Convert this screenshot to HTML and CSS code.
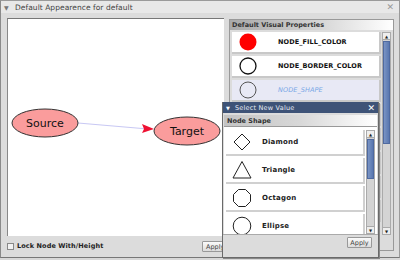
FILE: index.html
```html
<!DOCTYPE html>
<html>
<head>
<meta charset="utf-8">
<link rel="stylesheet" href="styles.css">
</head>
<body>
<div class="window">
  <div class="titlebar">
    <span class="tri">▼</span>
    <span class="title">Default Appearence for default</span>
    <span class="close">✕</span>
  </div>
  <div class="main">
    <div class="leftcol">
      <div class="canvas">
        <svg class="graph" width="217" height="218" viewBox="0 0 217 218">
          <line x1="71" y1="105" x2="141" y2="111" stroke="#c8c8f4" stroke-width="1"/>
          <polygon points="147,111 135,106 137,111 135,115" fill="#ee1133"/>
          <ellipse cx="38" cy="105" rx="33" ry="14" fill="#fa9c9c" stroke="#333" stroke-width="1"/>
          <text x="38" y="109" text-anchor="middle" class="nodelabel">Source</text>
          <ellipse cx="180" cy="113" rx="33" ry="14" fill="#fa9c9c" stroke="#333" stroke-width="1"/>
          <text x="180" y="117" text-anchor="middle" class="nodelabel">Target</text>
        </svg>
      </div>
      <div class="bottomrow">
        <span class="checkbox"></span>
        <span class="locklabel">Lock Node With/Height</span>
        <span class="btn mainapply">Apply</span>
      </div>
    </div>
    <div class="rightpanel">
      <div class="panelhead">Default Visual Properties</div>
      <div class="listwrap">
        <div class="rows">
          <div class="row"><svg width="20" height="20" viewBox="0 0 20 20"><circle cx="10" cy="10" r="8.5" fill="#ff0000"/></svg><span class="prop">NODE_FILL_COLOR</span></div>
          <div class="row"><svg width="20" height="20" viewBox="0 0 20 20"><circle cx="10" cy="10" r="8" fill="none" stroke="#111" stroke-width="1.3"/></svg><span class="prop">NODE_BORDER_COLOR</span></div>
          <div class="row sel"><svg width="20" height="20" viewBox="0 0 20 20"><circle cx="10" cy="10" r="8" fill="none" stroke="#555" stroke-width="1"/></svg><span class="prop italic">NODE_SHAPE</span></div>
          <div class="row"></div>
          <div class="row"></div>
          <div class="row"></div>
          <div class="row"></div>
          <div class="row"></div>
        </div>
        <div class="scroll outer">
          <div class="arrow up">▲</div>
          <div class="track"><div class="thumb"></div></div>
          <div class="arrow">▼</div>
        </div>
      </div>
    </div>
  </div>
  <div class="popup">
    <div class="ptitle">
      <span class="ptri">▼</span>
      <span class="ptext">Select New Value</span>
      <span class="pclose">✕</span>
    </div>
    <div class="phead">Node Shape</div>
    <div class="plistwrap">
      <div class="prows">
        <div class="prow"><svg width="20" height="20" viewBox="0 0 20 20"><polygon points="10,2 18,10 10,18 2,10" fill="none" stroke="#222" stroke-width="1"/></svg><span class="pname">Diamond</span></div>
        <div class="prow"><svg width="20" height="20" viewBox="0 0 20 20"><polygon points="10,1.5 19,18 1,18" fill="none" stroke="#222" stroke-width="1"/></svg><span class="pname">Triangle</span></div>
        <div class="prow"><svg width="20" height="20" viewBox="0 0 20 20"><polygon points="6.5,1.5 13.5,1.5 18.5,6.5 18.5,13.5 13.5,18.5 6.5,18.5 1.5,13.5 1.5,6.5" fill="none" stroke="#222" stroke-width="1"/></svg><span class="pname">Octagon</span></div>
        <div class="prow"><svg width="20" height="20" viewBox="0 0 20 20"><circle cx="10" cy="10" r="8.8" fill="none" stroke="#222" stroke-width="1"/></svg><span class="pname">Ellipse</span></div>
      </div>
      <div class="scroll inner">
        <div class="arrow up">▲</div>
        <div class="track"><div class="thumb"></div></div>
        <div class="arrow">▼</div>
      </div>
    </div>
    <div class="pbottom"><span class="btn">Apply</span></div>
  </div>
</div>
</body>
</html>
```
FILE: styles.css
```css
* { box-sizing: border-box; }
html, body { margin: 0; padding: 0; }
body {
  width: 400px; height: 260px; overflow: hidden;
  font-family: "DejaVu Sans", sans-serif;
  background: #d8d8d8;
}
.window {
  position: relative;
  width: 400px; height: 258px;
  background: #dcdcdc;
  border-left: 1px solid #8a8a8a;
  border-top: 1px solid #9a9a9a;
  border-right: 1px solid #9a9a9a;
  border-bottom: 1px solid #777;
}
.titlebar {
  height: 12px;
  background: #e8e8e8;
  display: flex; align-items: center;
  font-size: 7.5px; color: #444;
  padding-left: 3px;
}
.tri { font-size: 6px; color: #777; width: 11px; }
.title { flex: 1; letter-spacing: 0.05px; }
.close { color: #999; font-size: 9px; margin-right: 5px; }
.main {
  display: flex;
  padding: 5px 0 0 6px;
  height: 244px;
}
.leftcol {
  width: 222px;
  display: flex; flex-direction: column;
}
.canvas {
  width: 217px; height: 218px;
  background: #fff;
  border-top: 1px solid #777;
  border-left: 1px solid #888;
  position: relative;
}
.graph { position: absolute; left: -1px; top: -1px; }
.nodelabel { font-family: "DejaVu Sans", sans-serif; font-size: 11px; fill: #111; }
.bottomrow {
  display: flex; align-items: center;
  height: 16px; margin-top: 2px;
  font-size: 6.5px; font-weight: bold; color: #222;
}
.checkbox {
  width: 7px; height: 7px; border: 1px solid #888; background: #f2f2f2;
  margin-right: 3px;
}
.locklabel { flex: 1; letter-spacing: 0.1px; }
.btn {
  display: inline-block;
  font-size: 6.5px; font-weight: normal; color: #444;
  border: 1px solid #999;
  background: linear-gradient(#fafafa, #dcdcdc);
  padding: 1px 3px;
  border-radius: 1px;
}
.mainapply { margin-right: -3px; width: 30px; height: 11px; }
.rightpanel {
  width: 165px; height: 232px;
  margin-top: 1px;
  border: 1px solid #999;
  background: #dcdcdc;
  display: flex; flex-direction: column;
}
.panelhead {
  height: 10px;
  background: linear-gradient(90deg, #a9a9a9, #c8c8c8 40%, #ffffff);
  font-size: 6.5px; font-weight: bold; color: #333;
  padding-left: 2px; line-height: 10px;
}
.listwrap {
  display: flex; gap: 1px;
  padding: 2px 2px 0 2px;
  height: 205px;
  overflow: hidden;
}
.rows { flex: 1; display: flex; flex-direction: column; gap: 2px; overflow: hidden; }
.row {
  flex: none; height: 22px;
  background: #fff;
  border-right: 2px solid #c8c8c8;
  border-bottom: 2px solid #c8c8c8;
  display: flex; align-items: center;
  padding-left: 6px;
}
.row.sel { background: #e8e9f5; }
.prop {
  margin-left: 20px;
  font-size: 6.5px; font-weight: bold; color: #111;
  letter-spacing: 0.1px;
}
.prop.italic { font-weight: normal; font-style: italic; color: #7aa8e6; }
.scroll {
  width: 9px;
  display: flex; flex-direction: column;
  background: #d4d4d4;
  border: 1px solid #aaa;
}
.arrow {
  height: 7px; font-size: 4px; line-height: 7px; text-align: center;
  color: #222; background: #eee; border-bottom: 1px solid #aaa;
}
.arrow:last-child { border-bottom: none; border-top: 1px solid #aaa; }
.track { flex: 1; padding: 1px 0; }
.thumb {
  background: linear-gradient(90deg, #7a94c4, #5a78b0);
  border: 1px solid #4f6aa0;
}
.outer .thumb { height: 103px; }
.inner .thumb { height: 40px; }
.popup {
  position: absolute;
  left: 221px; top: 101px;
  width: 157px; height: 156px;
  background: #dcdcdc;
  border: 1px solid #6a6a6a;
  border-top: none;
  box-shadow: 1px 1px 0 #888;
  display: flex; flex-direction: column;
}
.ptitle {
  height: 11px;
  background: #3e5377;
  color: #e6ecf6;
  display: flex; align-items: center;
  font-size: 6.5px;
  padding: 0 3px;
}
.ptri { font-size: 5px; width: 9px; color: #fff; }
.ptext { flex: 1; letter-spacing: 0.2px; }
.pclose { font-size: 9px; color: #fff; }
.phead {
  margin: 2px 1px 0 1px;
  height: 12px;
  background: linear-gradient(90deg, #c4c4c4, #d8d8d8 50%, #ffffff);
  border-bottom: 1px solid #999;
  font-size: 6.5px; font-weight: bold; color: #333;
  padding-left: 3px; line-height: 12px;
}
.plistwrap {
  display: flex; gap: 1px;
  padding: 3px 2px 0 2px;
  background: #fff;
  height: 107px;
  margin: 0 1px;
}
.prows { flex: 1; display: flex; flex-direction: column; gap: 2px; overflow: hidden; }
.prow {
  flex: none; height: 26px;
  background: #fff;
  border-right: 2px solid #d0d0d0;
  border-bottom: 2px solid #d0d0d0;
  display: flex; align-items: center;
  padding-left: 6px;
}
.pname {
  margin-left: 10px;
  font-size: 7px; font-weight: bold; color: #222;
  letter-spacing: 0.2px;
}
.pbottom {
  flex: 1;
  display: flex; justify-content: flex-end; align-items: flex-start;
  padding: 2px 6px 0 0;
  border-top: 1px solid #aaa;
}
.pbottom .btn { width: 25px; height: 11px; text-align: center; padding: 1px 0; }
```
